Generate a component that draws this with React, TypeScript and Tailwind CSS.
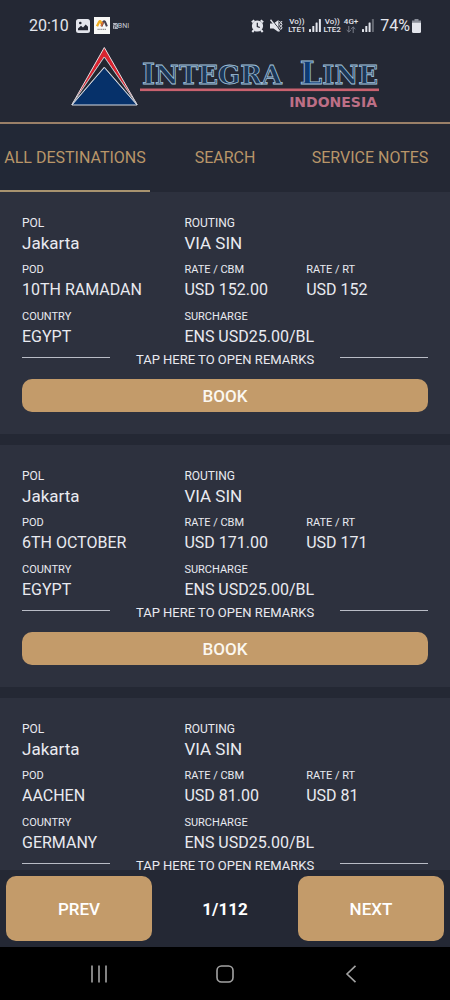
import React from "react";

type Rate = {
  pol: string;
  routing: string;
  pod: string;
  rateCbm: string;
  rateRt: string;
  country: string;
  surcharge: string;
};

const rates: Rate[] = [
  { pol: "Jakarta", routing: "VIA SIN", pod: "10TH RAMADAN", rateCbm: "USD 152.00", rateRt: "USD 152", country: "EGYPT", surcharge: "ENS USD25.00/BL" },
  { pol: "Jakarta", routing: "VIA SIN", pod: "6TH OCTOBER", rateCbm: "USD 171.00", rateRt: "USD 171", country: "EGYPT", surcharge: "ENS USD25.00/BL" },
  { pol: "Jakarta", routing: "VIA SIN", pod: "AACHEN", rateCbm: "USD 81.00", rateRt: "USD 81", country: "GERMANY", surcharge: "ENS USD25.00/BL" },
];

function Volte({ line }: { line: string }) {
  return (
    <span className="flex flex-col items-center text-[8px] leading-[8px] font-medium">
      <span>Vo))</span>
      <span>{line}</span>
    </span>
  );
}

function Signal({ weak }: { weak?: boolean }) {
  return (
    <svg width="12" height="13" viewBox="0 0 12 13" fill="currentColor" aria-hidden="true">
      <rect x="0" y="10" width="2" height="3" rx="0.5" />
      <rect x="3.3" y="7" width="2" height="6" rx="0.5" />
      <rect x="6.6" y="3.5" width="2" height="9.5" rx="0.5" />
      <rect x="9.9" y="0" width="2" height="13" rx="0.5" opacity={weak ? 0.35 : 1} />
    </svg>
  );
}

function StatusBar() {
  return (
    <div className="flex h-[46px] items-center justify-between px-[29px] pt-[5px] text-[#e3e5ec]">
      <div className="flex items-center">
        <span className="text-[16px] leading-5">20:10</span>
        <svg className="ml-[7px]" width="14" height="14" viewBox="0 0 14 14" aria-hidden="true">
          <rect width="14" height="14" rx="2.5" fill="#e3e5ec" />
          <path d="M2 11.2V9.5l3-2.7 2 1.7 2.7-3 2.3 2.2v3.5z" fill="#242733" />
          <circle cx="4.3" cy="4" r="1.3" fill="#242733" />
        </svg>
        <svg className="ml-[4px]" width="16" height="17" viewBox="0 0 16 17" aria-hidden="true">
          <rect width="16" height="17" fill="#f8f8f6" />
          <path d="M3 9.3 5.2 4.800q.8-1.200 1.500 0l1.600 3.500" fill="none" stroke="#f0ae22" strokeWidth="2.4" />
          <path d="M7.500 9.300 9.300 4.800q.9-1.200 1.700 0l1.900 4.500" fill="none" stroke="#45414d" strokeWidth="2" />
          <path d="M7.3 9.3 9 5" stroke="#df6b35" strokeWidth="1.5" />
          <path d="M3.5 12.3h9" stroke="#77777b" strokeWidth="1" strokeDasharray="1.3 .5" />
        </svg>
        <svg className="ml-[3px]" width="5" height="6" viewBox="0 0 5 6" aria-hidden="true">
          <rect width="5" height="6" fill="#aeb2bd" />
          <path d="M0 1.5 2 3 1 6M5 0 2.5 3 5 5" fill="none" stroke="#343844" strokeWidth=".7" />
        </svg>
        <span className="text-[7px] leading-3 text-[#c7cad4]">BNI</span>
      </div>
      <div className="flex items-center">
        <svg width="13" height="14" viewBox="0 0 13 14" aria-hidden="true">
          <circle cx="6.5" cy="7" r="5.6" fill="#e3e5ec" />
          <path d="m.8 3.3 2.5-2M12.2 3.3l-2.5-2M3 11l-1.7 2M10 11l1.7 2" stroke="#e3e5ec" strokeWidth="2" />
          <path d="M6.3 3.8v3.7l2.5 1" fill="none" stroke="#242733" strokeWidth="1.2" />
        </svg>
        <svg className="ml-[6px]" width="13" height="14" viewBox="0 0 13 14" fill="none" stroke="#e3e5ec" aria-hidden="true">
          <path d="M0 4.500h3.500L8.500 1v12L3.500 9.500H0z" fill="#e3e5ec" stroke="none" />
          <path d="m1.800 .500 8 10.500" stroke="#242733" strokeWidth="1" />
          <path d="m.5.8 9 11.6" strokeWidth="1.4" />
          <path d="m9.5 2 1 1.7-1 1.7 1 1.7-1 1.7 1 1.7M12 2l-1 1.7 1 1.7-1 1.7 1 1.7-1 1.7" strokeWidth="1" />
        </svg>
        <span className="ml-[5px]"><Volte line="LTE1" /></span>
        <span className="ml-[3px]"><Signal /></span>
        <span className="ml-[3px]"><Volte line="LTE2" /></span>
        <span className="ml-[3px] flex flex-col items-center text-[8px] leading-[8px] font-medium">
          <span>4G+</span>
          <svg width="10" height="7" viewBox="0 0 10 7" fill="none" stroke="#7a7e8a" aria-hidden="true">
            <path d="M2.8 0v6M.7 4l2.1 2 2.1-2M7.2 7V1M5.1 3l2.1-2 2.1 2" />
          </svg>
        </span>
        <span className="ml-[4px]"><Signal weak /></span>
        <span className="ml-[6px] text-[16px] leading-5">74%</span>
        <svg className="ml-[2px]" width="9" height="14" viewBox="0 0 9 14" aria-hidden="true">
          <path d="M2.5 0h4v1.5H9V4H0V1.5h2.5z" fill="#8a8e99" />
          <path d="M0 3.8h9v8.7q0 1.5-1.5 1.5h-6Q0 14 0 12.5z" fill="#e3e5ec" />
        </svg>
      </div>
    </div>
  );
}

function Logo() {
  return (
    <svg className="mx-auto block" width="310" height="62" viewBox="0 0 310 62" role="img" aria-label="Integra Line Indonesia">
      <path d="M34.3 1.5 67 58.5 34.3 11 2 58.5z" fill="#d7232f" stroke="#e5e0e3" strokeWidth="1" strokeLinejoin="round" />
      <path d="M34.3 11 67 58.5 34.3 21 2 58.5z" fill="#22262f" stroke="#c9cdd5" strokeWidth="0.8" strokeLinejoin="round" />
      <path d="M34.3 21.5 67 59H2z" fill="#06316a" stroke="#d5dae2" strokeWidth="1" strokeLinejoin="round" />
      <g fill="#1b3656" stroke="#a3c3dc" strokeWidth="0.8" fontFamily="'DejaVu Serif', serif" fontWeight="700">
        <text x="72" y="37.5" fontSize="28">
          I<tspan fontSize="26">NTEGRA</tspan>
        </text>
        <text x="308" y="37.500" fontSize="32" textAnchor="end">
          <tspan fill="#0d3a74">L</tspan><tspan fontSize="26">INE</tspan>
        </text>
      </g>
      <rect x="70" y="42.5" width="239" height="2.6" fill="#c9626f" />
      <text x="307" y="60.5" fontSize="14" textAnchor="end" fill="#bd6f86" fontFamily="'DejaVu Sans', sans-serif" fontWeight="700">
        INDONESIA
      </text>
    </svg>
  );
}

function Field({ label, value, lead, wide }: { label: string; value: string; lead?: boolean; wide?: boolean }) {
  return (
    <div className={wide ? "col-span-2" : ""}>
      <dt className={lead ? "text-[12px] leading-4" : "text-[11px] leading-4"}>{label}</dt>
      <dd className={lead ? "text-[17px] leading-6" : "text-[16px] leading-6"}>{value}</dd>
    </div>
  );
}

function RateCard({ rate }: { rate: Rate }) {
  return (
    <article className="bg-[#2d313e] px-[22px] pt-[23px] pb-[22px] text-[#e9eaf0]">
      <dl className="grid grid-cols-[4fr_3fr_3fr] gap-y-[7px]">
        <Field label="POL" value={rate.pol} lead />
        <Field label="ROUTING" value={rate.routing} lead wide />
        <Field label="POD" value={rate.pod} />
        <Field label="RATE / CBM" value={rate.rateCbm} />
        <Field label="RATE / RT" value={rate.rateRt} />
        <Field label="COUNTRY" value={rate.country} />
        <Field label="SURCHARGE" value={rate.surcharge} wide />
      </dl>
      <button type="button" className="mt-[3px] flex w-full items-start justify-between">
        <span className="mt-[5px] h-px w-[88px] bg-[#b9bcc6]" />
        <span className="text-[13px] leading-4">TAP HERE TO OPEN REMARKS</span>
        <span className="mt-[5px] h-px w-[88px] bg-[#b9bcc6]" />
      </button>
      <button type="button" className="mt-[11px] h-[33px] w-full rounded-[10px] bg-[#c39b6a] text-[17px] leading-6 font-medium text-[#fbf7f0]">
        BOOK
      </button>
    </article>
  );
}

export default function App() {
  return (
    <div className="flex h-screen flex-col overflow-hidden bg-[#242834] font-[Roboto,'Liberation_Sans',sans-serif]">
      <header className="shrink-0 border-b-2 border-[#9a8068] pb-[14px]">
        <StatusBar />
        <Logo />
      </header>
      <nav className="grid shrink-0 grid-cols-3 text-[16px] leading-6 text-[#b99669]">
        <button type="button" aria-current="page" className="h-[68px] border-b-2 border-[#a8936f] bg-[#222836] pt-[2px] whitespace-nowrap">ALL DESTINATIONS</button>
        <button type="button" className="h-[68px] border-b-2 border-transparent pt-[2px] whitespace-nowrap">SEARCH</button>
        <button type="button" className="h-[68px] border-b-2 border-transparent pt-[2px] pr-[10px] whitespace-nowrap">SERVICE NOTES</button>
      </nav>
      <main className="flex min-h-0 flex-1 flex-col gap-[11px] overflow-y-auto [scrollbar-width:none]">
        {rates.map((rate) => (
          <RateCard key={rate.pod} rate={rate} />
        ))}
      </main>
      <footer className="shrink-0">
        <div className="grid grid-cols-3 items-center p-[6px] text-[17px] leading-6 text-white">
          <button type="button" className="h-[65px] rounded-[10px] bg-[#c39b6a] font-medium">PREV</button>
          <span className="text-center font-bold">1/112</span>
          <button type="button" className="h-[65px] rounded-[10px] bg-[#c39b6a] font-medium">NEXT</button>
        </div>
        <div className="grid h-[53px] grid-cols-3 bg-black px-9 text-[#a3a3a3]">
          <button type="button" aria-label="Recent apps" className="flex items-center justify-center">
            <svg width="18" height="18" viewBox="0 0 18 18" stroke="currentColor" strokeWidth="1.6">
              <path d="M2 .5v17M9 .5v17M16 .5v17" />
            </svg>
          </button>
          <button type="button" aria-label="Home" className="flex items-center justify-center">
            <svg width="18" height="18" viewBox="0 0 18 18" fill="none" stroke="currentColor" strokeWidth="1.6">
              <rect x="1" y="1" width="16" height="16" rx="4.5" />
            </svg>
          </button>
          <button type="button" aria-label="Back" className="flex items-center justify-center">
            <svg width="18" height="18" viewBox="0 0 18 18" fill="none" stroke="currentColor" strokeWidth="1.6">
              <path d="M13.5.8 5 9l8.500 8.200" />
            </svg>
          </button>
        </div>
      </footer>
    </div>
  );
}
